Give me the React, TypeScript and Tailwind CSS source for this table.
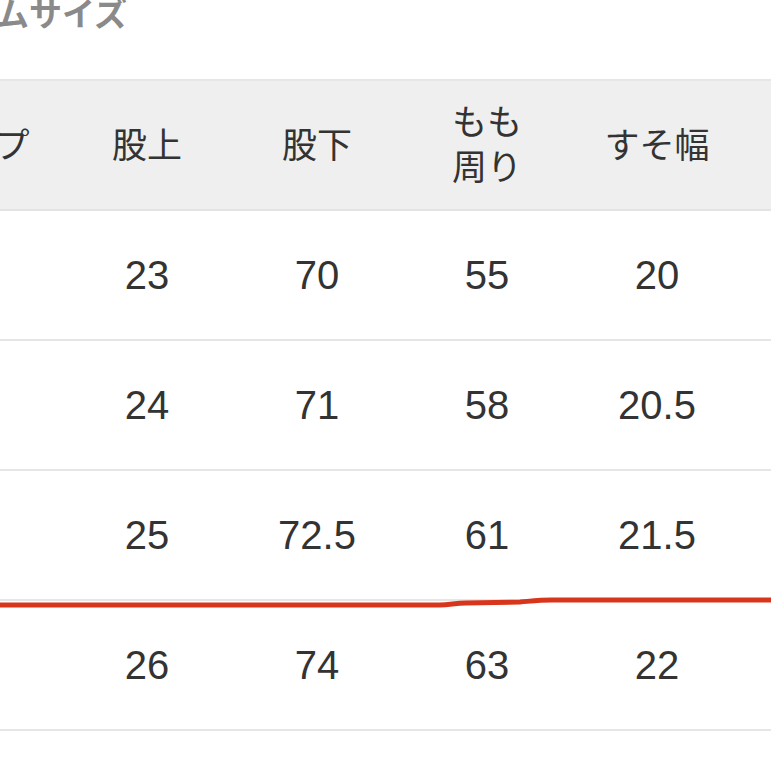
const headers: string[][] = [["ヒップ"], ["股上"], ["股下"], ["もも", "周り"], ["すそ幅"]];

const rows: string[][] = [
  ["84", "23", "70", "55", "20"],
  ["88", "24", "71", "58", "20.5"],
  ["92", "25", "72.5", "61", "21.5"],
  ["96", "26", "74", "63", "22"],
  ["98", "27", "75", "66", "22.5"],
];

export default function App() {
  return (
    <div className="relative h-[771px] w-[771px] overflow-hidden bg-white">
      <div className="-ml-[108px] -mt-[4px] w-[879px]">
        <h2 className="pl-[38px] text-[33px] font-semibold leading-[33px] text-[#8a8a8a] [font-family:'Noto_Sans_CJK_JP',sans-serif]">
          ボトムサイズ
        </h2>

        <div className="mt-[50px] border-t-2 border-[#e6e6e6]">
          <div className="flex h-[130px] items-center border-b-2 border-[#e3e3e3] bg-[#efefef] pb-[6px] text-[35px] leading-[45px] text-[#333] [font-family:'Noto_Sans_CJK_JP',sans-serif]">
            {headers.map((h) => (
              <div key={h.join("")} className="flex w-[170px] shrink-0 flex-col items-center">
                {h.map((line) => (
                  <span key={line}>{line}</span>
                ))}
              </div>
            ))}
          </div>

          {rows.map((r, i) => (
            <div
              key={i}
              className="flex h-[130px] items-center border-b-2 border-[#e6e6e6] text-[40px] text-[#333] [font-family:'Liberation_Sans','Noto_Sans_CJK_JP',sans-serif]"
            >
              {r.map((v, j) => (
                <div key={j} className="w-[170px] shrink-0 text-center">
                  {v}
                </div>
              ))}
            </div>
          ))}
        </div>
      </div>

      {/* hand-drawn red mark */}
      <svg className="absolute left-0 top-0" width="771" height="771" viewBox="0 0 771 771" fill="none">
        <path
          d="M0 605 L440 605 C450 605 455 603 466 603 L520 602 C532 601 540 600 552 600 L771 600"
          stroke="#d8361c"
          strokeWidth="5"
          strokeLinecap="round"
        />
      </svg>
    </div>
  );
}
